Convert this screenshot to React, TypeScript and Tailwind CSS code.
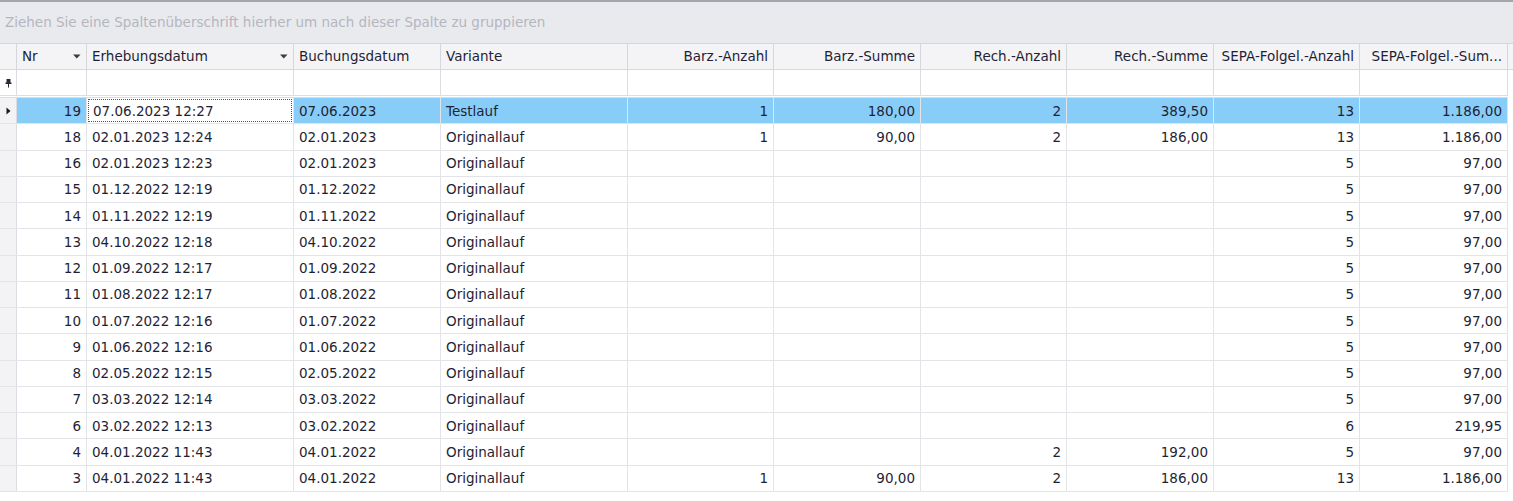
import React from 'react';

type Col = { title: string; w: number; align: 'left' | 'right'; menu?: boolean };

const columns: Col[] = [
  { title: 'Nr', w: 70, align: 'right', menu: true },
  { title: 'Erhebungsdatum', w: 207, align: 'left', menu: true },
  { title: 'Buchungsdatum', w: 147, align: 'left' },
  { title: 'Variante', w: 187, align: 'left' },
  { title: 'Barz.-Anzahl', w: 146, align: 'right' },
  { title: 'Barz.-Summe', w: 147, align: 'right' },
  { title: 'Rech.-Anzahl', w: 146, align: 'right' },
  { title: 'Rech.-Summe', w: 147, align: 'right' },
  { title: 'SEPA-Folgel.-Anzahl', w: 146, align: 'right' },
  { title: 'SEPA-Folgel.-Sum...', w: 148, align: 'right' },
];

const rows: string[][] = [
  ['19', '07.06.2023 12:27', '07.06.2023', 'Testlauf', '1', '180,00', '2', '389,50', '13', '1.186,00'],
  ['18', '02.01.2023 12:24', '02.01.2023', 'Originallauf', '1', '90,00', '2', '186,00', '13', '1.186,00'],
  ['16', '02.01.2023 12:23', '02.01.2023', 'Originallauf', '', '', '', '', '5', '97,00'],
  ['15', '01.12.2022 12:19', '01.12.2022', 'Originallauf', '', '', '', '', '5', '97,00'],
  ['14', '01.11.2022 12:19', '01.11.2022', 'Originallauf', '', '', '', '', '5', '97,00'],
  ['13', '04.10.2022 12:18', '04.10.2022', 'Originallauf', '', '', '', '', '5', '97,00'],
  ['12', '01.09.2022 12:17', '01.09.2022', 'Originallauf', '', '', '', '', '5', '97,00'],
  ['11', '01.08.2022 12:17', '01.08.2022', 'Originallauf', '', '', '', '', '5', '97,00'],
  ['10', '01.07.2022 12:16', '01.07.2022', 'Originallauf', '', '', '', '', '5', '97,00'],
  ['9', '01.06.2022 12:16', '01.06.2022', 'Originallauf', '', '', '', '', '5', '97,00'],
  ['8', '02.05.2022 12:15', '02.05.2022', 'Originallauf', '', '', '', '', '5', '97,00'],
  ['7', '03.03.2022 12:14', '03.03.2022', 'Originallauf', '', '', '', '', '5', '97,00'],
  ['6', '03.02.2022 12:13', '03.02.2022', 'Originallauf', '', '', '', '', '6', '219,95'],
  ['4', '04.01.2022 11:43', '04.01.2022', 'Originallauf', '', '', '2', '192,00', '5', '97,00'],
  ['3', '04.01.2022 11:43', '04.01.2022', 'Originallauf', '1', '90,00', '2', '186,00', '13', '1.186,00'],
];

function MenuArrow() {
  return (
    <svg width="8" height="5" viewBox="0 0 8 5" className="shrink-0">
      <path d="M0 0.5h7.5L3.75 4.5z" fill="#3a3a44" />
    </svg>
  );
}

// pin glyph of the auto filter row
function FilterPin() {
  return (
    <svg width="7" height="10" viewBox="0 0 7 10">
      <path d="M1.5 1h4v3.5h1V6h-6V4.5h1z" fill="#2a2a34" />
      <rect x="3" y="6" width="1" height="3.5" fill="#2a2a34" />
    </svg>
  );
}

function RowArrow() {
  return (
    <svg width="5" height="8" viewBox="0 0 5 8">
      <path d="M0.5 0.5L4.5 4L0.5 7.5z" fill="#1a1a22" />
    </svg>
  );
}

export default function App() {
  return (
    <div className="w-[1513px] h-[501px] overflow-hidden bg-white text-[#1f1f35] font-['DejaVu_Sans','Liberation_Sans',sans-serif] text-[13.5px]">
      <div className="h-[2px] bg-[#a4a4ac]" />
      {/* group panel */}
      <div className="h-[41px] bg-[#e9eaee] flex items-center pl-[5px] text-[#b5b6be]">
        Ziehen Sie eine Spaltenüberschrift hierher um nach dieser Spalte zu gruppieren
      </div>

      {/* header */}
      <div className="flex h-[27px] border-t border-b border-[#d6d7dc] bg-[#f4f4f6]">
        <div className="w-[17px] shrink-0 border-r border-[#d6d7dc]" />
        {columns.map((c, i) => (
          <div
            key={i}
            style={{ width: c.w }}
            className={`shrink-0 border-r border-[#d6d7dc] flex items-center gap-1 px-[5px] whitespace-nowrap overflow-hidden ${c.align === 'right' && !c.menu ? 'justify-end' : ''}`}
          >
            <span className={c.menu ? 'flex-1' : ''}>{c.title}</span>
            {c.menu && <MenuArrow />}
          </div>
        ))}
        <div className="flex-1" />
      </div>

      {/* auto filter row */}
      <div className="flex w-[1508px] h-[26px] border-b border-[#dcdde2]">
        <div className="w-[17px] shrink-0 border-r border-[#dcdde2] flex items-center justify-center">
          <FilterPin />
        </div>
        {columns.map((c, i) => (
          <div key={i} style={{ width: c.w }} className="shrink-0 border-r border-[#dcdde2]" />
        ))}
      </div>
      <div className="w-[1508px] h-[2px] border-b border-[#dcdde2]" />

      {/* data rows */}
      {rows.map((r, ri) => {
        const sel = ri === 0;
        return (
          <div key={ri} className="flex w-[1508px] h-[26.27px] border-b border-[#e3e4e8]">
            <div className="w-[17px] shrink-0 border-r border-[#dcdde2] bg-[#f3f3f5] flex items-center justify-center">
              {sel && <RowArrow />}
            </div>
            {r.map((v, ci) => {
              const c = columns[ci];
              const focused = sel && ci === 1;
              return (
                <div
                  key={ci}
                  style={{ width: c.w }}
                  className={`shrink-0 border-r border-[#e3e4e8] flex items-center whitespace-nowrap ${c.align === 'right' ? 'justify-end' : ''} ${sel && !focused ? 'bg-[#88cdf8]' : ''}`}
                >
                  {focused ? (
                    <div className="m-[1px] h-[calc(100%-2px)] w-full border border-dotted border-[#555] flex items-center px-[4px]">{v}</div>
                  ) : (
                    <span className="px-[5px]">{v}</span>
                  )}
                </div>
              );
            })}
          </div>
        );
      })}
    </div>
  );
}
